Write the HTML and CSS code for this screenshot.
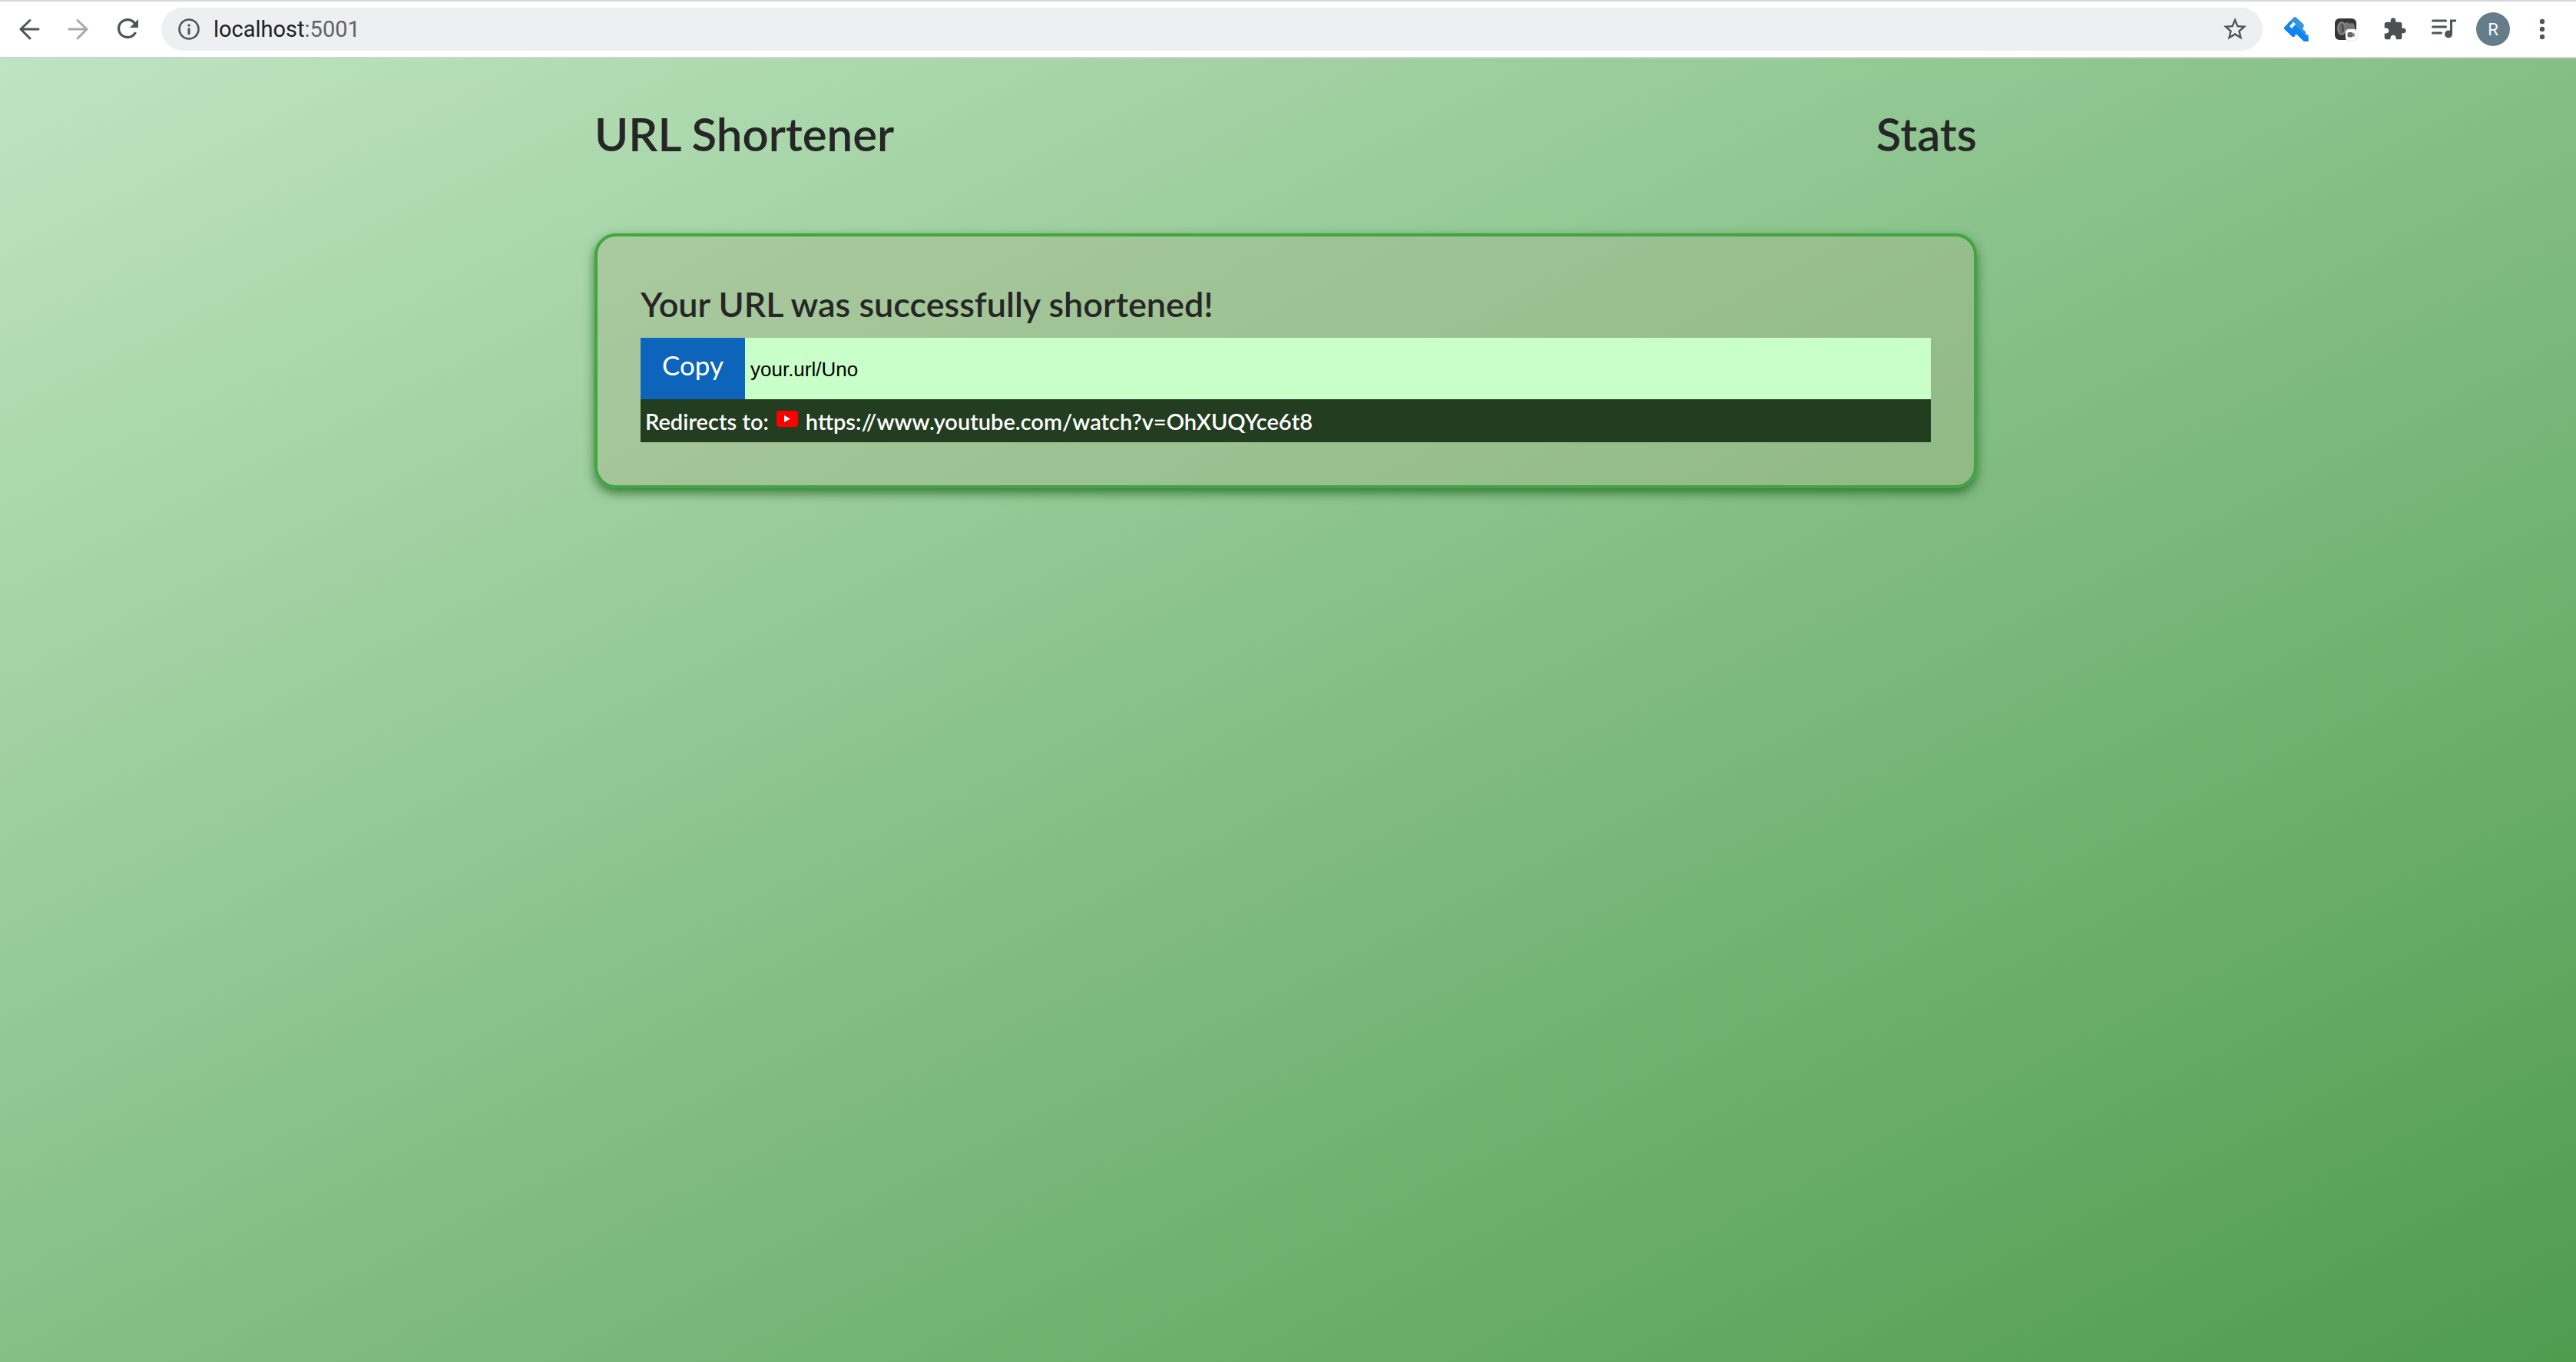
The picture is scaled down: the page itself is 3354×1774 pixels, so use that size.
FILE: index.html
```html
<!DOCTYPE html>
<html lang="en">
<head>
<meta charset="utf-8">
<title>URL Shortener</title>
<link rel="stylesheet" href="styles.css">
</head>
<body>
<header class="toolbar">
  <button class="tool" aria-label="Back"><svg width="32" height="32" viewBox="0 0 32 32" class="line"><path d="M28 16H5M17 4.500L5 16l12 12"/></svg></button>
  <button class="tool faded" aria-label="Forward"><svg width="32" height="32" viewBox="0 0 32 32" class="line"><path d="M4 16h23M15 4.500L27 16 15 28"/></svg></button>
  <button class="tool" aria-label="Reload"><svg width="32" height="32" viewBox="0 0 32 32"><path d="M25.500 8.500A11.500 11.500 0 1 0 26.500 20" fill="none" stroke="#50545a" stroke-width="3.200"/><path d="M30 3v11H19z" fill="#50545a"/></svg></button>
  <div class="address">
    <svg width="28" height="28" viewBox="0 0 28 28"><circle cx="14" cy="14" r="12.500" fill="none" stroke="#50545a" stroke-width="2.600"/><path d="M12.500 7.500h3v3h-3zM12.500 12.500h3V21h-3z" fill="#50545a"/></svg>
    <span class="location">localhost<span class="port">:5001</span></span>
    <button class="star" aria-label="Bookmark this page"><svg width="36" height="36" viewBox="0 0 24 24"><path d="M22 9.240l-7.190-.62L12 2 9.190 8.630 2 9.240l5.460 4.730L5.820 21 12 17.270 18.180 21l-1.630-7.030L22 9.240zM12 15.400l-3.760 2.270 1-4.280-3.320-2.880 4.380-.38L12 6.100l1.710 4.040 4.380.38-3.320 2.880 1 4.280L12 15.400z" fill="#50545a"/></svg></button>
  </div>
  <nav class="extensions" aria-label="Extensions">
    <button class="tool" aria-label="Key"><svg width="32" height="32" viewBox="0 0 32 32"><path d="M0 14L12.500 0.500Q14-.5 15.500.5L25 9.500q1.500 2 0 4l-1 2 4 4v3.500h3.500V32H26L15.500 22l-2 3.500q-1.500 1.500-3 0L.5 16q-1-1 -.5-2z" fill="#3695de"/><path d="M0 14L8 5l23.500 22v5H26L15.500 22l-2 3.500q-1.500 1.500-3 0L.5 16q-1-1-.5-2z" fill="#1284f2"/><path d="M7.500 12L12 7l2.500 2.500L10 14.500z" fill="#fff" stroke="#fff" stroke-width="1"/></svg></button>
    <button class="tool" aria-label="Recorder"><svg width="32" height="32" viewBox="0 0 32 32"><rect x="2" y="2" width="28" height="28" rx="6" fill="#353536"/><ellipse cx="11" cy="15" rx="5" ry="8" fill="#6c6c6c" stroke="#888" stroke-width="2"/><path d="M15 8q4-3 6 1q6-3 7 4v4H18z" fill="#777"/><path d="M11 10q3 5 1 10" stroke="#444" stroke-width="2" fill="none"/><rect x="16" y="16" width="15" height="15" rx="4" fill="#fff" stroke="#ccc" stroke-width=".5"/><rect x="18.500" y="20" width="7" height="6.500" rx="1.500" fill="#666"/><path d="M25 23.500l2.500-3v6z" fill="#666"/></svg></button>
    <button class="tool" aria-label="All extensions"><svg width="32" height="32" viewBox="0 0 24 24"><path d="M20.500 11H19V7c0-1.100-.9-2-2-2h-4V3.500C13 2.120 11.880 1 10.500 1S8 2.120 8 3.500V5H4c-1.100 0-1.990.9-1.990 2v3.800H3.500c1.490 0 2.700 1.210 2.700 2.700s-1.210 2.700-2.700 2.700H2V20c0 1.100.9 2 2 2h3.800v-1.500c0-1.490 1.210-2.700 2.700-2.700 1.490 0 2.700 1.210 2.700 2.700V22H17c1.100 0 2-.9 2-2v-4h1.500c1.380 0 2.500-1.120 2.500-2.500S21.880 11 20.500 11z" fill="#4c5055"/></svg></button>
    <button class="tool" aria-label="Media controls"><svg width="32" height="32" viewBox="0 0 32 32"><path d="M1.500 5h17M1.500 13h17M1.500 21h11" stroke="#50545a" stroke-width="3" stroke-linecap="round"/><circle cx="22" cy="22.500" r="5" fill="#50545a"/><path d="M25.500 22V5H32" stroke="#50545a" stroke-width="3" fill="none"/></svg></button>
    <button class="avatar" aria-label="Profile">R</button>
    <button class="tool menu" aria-label="Menu"><svg width="32" height="32" viewBox="0 0 32 32" fill="#50545a"><circle cx="16" cy="6" r="3.200"/><circle cx="16" cy="16" r="3.200"/><circle cx="16" cy="26" r="3.200"/></svg></button>
  </nav>
</header>
<div class="page">
  <div class="container">
    <nav class="site-nav">
      <a href="#home">URL Shortener</a>
      <a href="#stats">Stats</a>
    </nav>
    <main class="card">
      <h1>Your URL was successfully shortened!</h1>
      <div class="result">
        <button class="copy">Copy</button>
        <input class="short-url" type="text" value="your.url/Uno" aria-label="Shortened URL" readonly>
      </div>
      <p class="redirect"><span>Redirects to:</span>
        <svg width="28" height="28" viewBox="0 0 28 28"><rect x="0" y="1" width="28" height="21" rx="4" fill="#f00"/><path d="M10 7l8 4.500-8 4.500z" fill="#fff"/></svg>
        <a href="https://www.youtube.com/watch?v=OhXUQYce6t8">https://www.youtube.com/watch?v=OhXUQYce6t8</a></p>
    </main>
  </div>
</div>
</body>
</html>
```

FILE: styles.css
```css
* { box-sizing: border-box; }
body {
  margin: 0;
  min-height: 100vh;
  display: flex;
  flex-direction: column;
  font-family: Lato, "Noto Sans", sans-serif;
  color: #262626;
}
button { border: 0; padding: 0; background: none; font: inherit; color: inherit; }
a { color: inherit; text-decoration: none; }
svg { display: block; flex: none; }

/* Browser toolbar */
.toolbar {
  height: 76px;
  display: flex;
  align-items: center;
  gap: 32px;
  padding: 0 28px 0 22px;
  background: #fff;
  border-top: 2px solid #d5d9de;
  border-bottom: 2px solid #d0d0d6;
  font-family: Roboto, sans-serif;
}
.line { fill: none; stroke: #50545a; stroke-width: 3; stroke-linecap: round; }
.faded .line { stroke: #a9a9ab; }
.address {
  flex: 1;
  height: 56px;
  margin-left: -4px;
  display: flex;
  align-items: center;
  gap: 18px;
  padding: 0 18px 0 22px;
  border-radius: 28px;
  background: #eeeff1;
  font-size: 29px;
}
.location { flex: 1; color: #202124; }
.port { color: #5f6368; }
.extensions { display: flex; align-items: center; gap: 32px; margin-left: -4px; }
.avatar {
  width: 44px;
  height: 44px;
  margin: 0 -6px;
  border-radius: 50%;
  background: #657d8b;
  color: #fff;
  font-size: 22px;
}

/* Page */
.page {
  flex: 1;
  padding: 0 6px 60px 0;
  background: linear-gradient(to bottom right, #bfe4c0, #85bf86 50%, #4f9c4f);
}
.container { max-width: 1800px; margin: 0 auto; }
.site-nav {
  display: flex;
  justify-content: space-between;
  padding: 62px 0 94px;
  font-size: 60px;
  line-height: 72px;
  font-weight: 600;
}
.card {
  padding: 56px;
  border: 4px solid #41a541;
  border-radius: 28px;
  background: rgba(170, 183, 143, .4);
  background-clip: padding-box;
  box-shadow: 0 6px 14px rgba(30, 100, 30, .8);
}
h1 { margin: 0 0 12px; font-size: 45px; line-height: 64px; font-weight: 600; }
.result { display: flex; height: 80px; }
.copy { width: 136px; padding-bottom: 10px; background: #0c65ba; color: #fff; font-size: 35px; }
.short-url {
  flex: 1;
  min-width: 0;
  padding: 2px 7px 0;
  border: 0;
  background: #c9ffc9;
  color: #000;
  font: 26px "Liberation Sans", sans-serif;
}
.redirect {
  height: 56px;
  margin: 0;
  display: flex;
  align-items: center;
  gap: 10px;
  padding: 0 6px;
  background: #223d20;
  color: #fff;
  font-size: 29px;
  font-weight: 600;
}
```
